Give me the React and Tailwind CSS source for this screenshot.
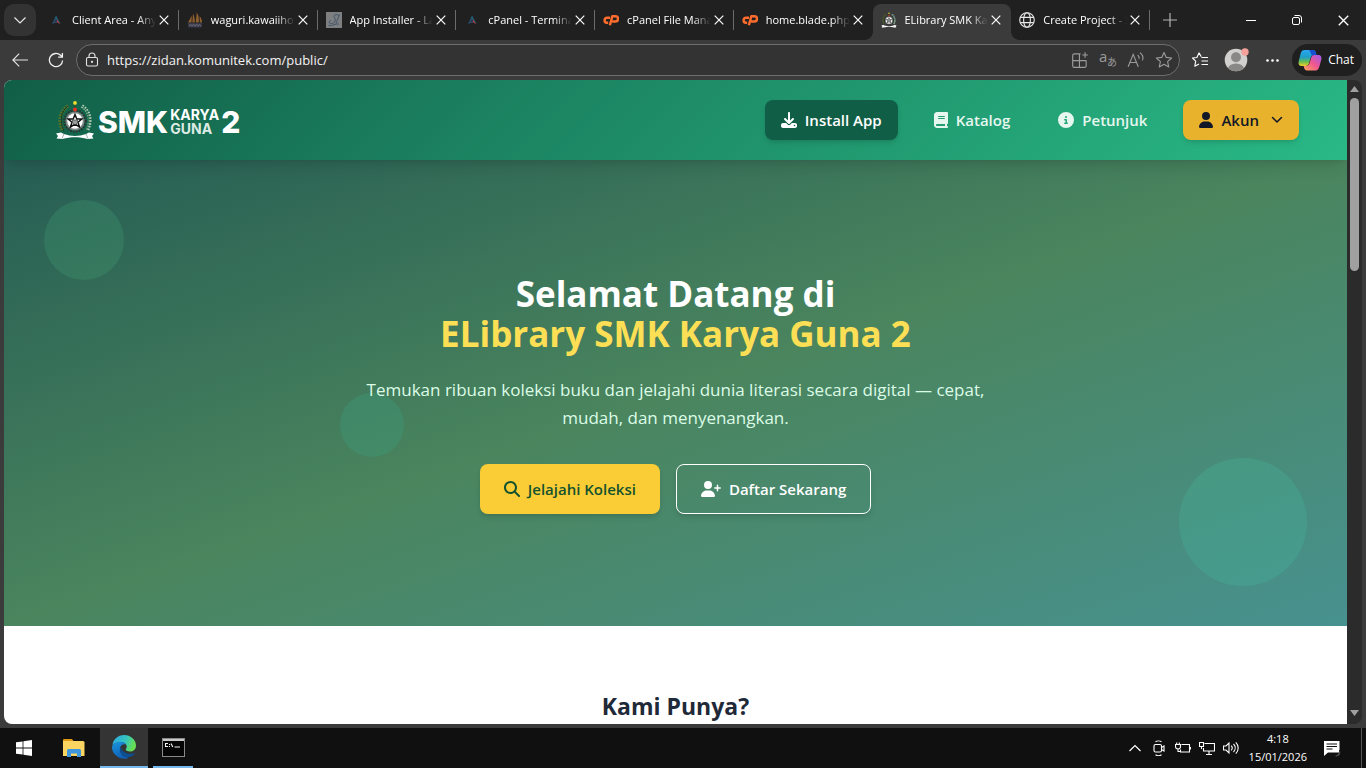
import React from "react";

function CloseIcon({ className }) {
  return (
    <svg viewBox="0 0 10 10" className={className} fill="none" stroke="currentColor" strokeWidth="1.2">
      <path d="M.7.7l8.6 8.6M9.3.7L.7 9.3" />
    </svg>
  );
}

function TriangleMark() {
  return (
    <svg viewBox="0 0 16 16" className="size-4">
      <path d="M8 3.5L4 12l2-.7L9 6z" fill="#274f6e" />
      <path d="M8 3.5l4.6 8.5-2.4-1.2L7.4 6z" fill="#245f76" />
      <path d="M8.6 7.6l3.6 4.2-3-1.4z" fill="#c23a3a" />
      <path d="M5 11.6l3.4-2.4 1 1.4-3 .4z" fill="#38558e" />
    </svg>
  );
}

function ShipMark() {
  return (
    <svg viewBox="0 0 16 16" className="size-4">
      <path d="M4.800 3.500L4.500 10.500H1zM6 1.500c1.500 3 2 6 1.800 9H5.300zM9.800.5c2 3 2.400 6.500 2 10H8.700zM12.600 4c1.600 2 2.400 4 2.400 6.500h-2.200z" fill="#8f5f2e" />
      <path d="M.5 11h15l-1.200 4.500H1.700z" fill="#34364a" />
      <path d="M2 14.500l1.500-2.500L5 14.500 6.500 12 8 14.500 9.500 12l1.500 2.500 1.500-2.500 1.500 2.500" stroke="#6a6672" fill="none" />
    </svg>
  );
}

function InstallerMark() {
  return (
    <svg viewBox="0 0 16 16" className="size-4">
      <rect width="16" height="16" fill="#7d7f80" />
      <path d="M13 3.500c-3-2-6-.5-4.500 2S9.500 11 5.500 11.500c-3 .3-3-2.500-.5-3M13.500 2.500L10 11.500M2.500 13.500c4 .5 6.500-2 10.500-1.500" fill="none" stroke="#3a5068" strokeWidth=".9" />
    </svg>
  );
}

function CpMark() {
  return (
    <svg viewBox="0 0 17 16" className="size-4" fill="none" stroke="#ff6c2c" strokeWidth="2.600" strokeLinejoin="round">
      <path d="M7.500 5.600H4.600a2.700 2.700 0 0 0-.4 5.400h1.300" />
      <path d="M7.300 13.600L9.900 4h3.300a2.600 2.600 0 0 1 0 5.600H9.700" />
    </svg>
  );
}

function Emblem({ className }) {
  return (
    <svg viewBox="0 0 38 40" className={className}>
      <path d="M12 6C4 11 2 21 7 31" fill="none" stroke="#5f7424" strokeWidth="3.600" strokeDasharray="1.600 1.200" />
      <path d="M12 6C5 11 3 21 8 31" fill="none" stroke="#1d3a20" strokeWidth="1" />
      <path d="M26 6c8 5 10 15 5 25" fill="none" stroke="#b3cbbb" strokeWidth="3.600" strokeDasharray="1.600 1.200" />
      <path d="M26 6c7 5 9 15 4 25" fill="none" stroke="#2d7a4c" strokeWidth="1" />
      <circle cx="19" cy="21" r="10.500" fill="none" stroke="#2b3231" strokeWidth="2.500" strokeDasharray="1.600 1.200" />
      <circle cx="19" cy="21" r="9.600" fill="#7c8582" />
      <circle cx="19" cy="21" r="7.800" fill="#fff" />
      <path d="M19 14.500l1.800 4.500h5L22 22.200l1.500 4.800-4.500-2.800-4.500 2.800 1.500-4.800L12.200 19h5z" fill="none" stroke="#111" strokeWidth="1.500" />
      <path d="M16.500 20h5v2.500L19 25l-2.500-2.500z" fill="#9a9fa0" stroke="#333" strokeWidth=".6" />
      <circle cx="19" cy="3" r="1.900" fill="#e9df2c" />
      <path d="M18.500 4.800h1V8h-1z" fill="#39421f" />
      <circle cx="19" cy="9.500" r="1.900" fill="#e4322b" />
      <path d="M0 33.500l5-1 3 1.500c7 2.500 15 2.500 22 0l3-1.500 5 1-2 2.500 1.500 2.500-6 .5c-8-2.500-17-2.500-25 0l-6-.5L2 36z" fill="#fff" />
      <path d="M8 34l-2 4.500M30 34l2 4.500" stroke="#8a9a96" strokeWidth=".8" />
    </svg>
  );
}

function GlobeMark() {
  return (
    <svg viewBox="0 0 16 16" className="size-4" fill="none" stroke="#e8e8e8" strokeWidth="1.100">
      <circle cx="8" cy="8" r="7.300" />
      <ellipse cx="8" cy="8" rx="3.400" ry="7.300" />
      <path d="M1.300 5.400h13.400M1.300 10.600h13.400" />
    </svg>
  );
}

const tabs = [
  { title: "Client Area - Anymhost", icon: <TriangleMark /> },
  { title: "waguri.kawaiihost.net", icon: <ShipMark /> },
  { title: "App Installer - Laravel", icon: <InstallerMark /> },
  { title: "cPanel - Terminal", icon: <TriangleMark /> },
  { title: "cPanel File Manager", icon: <CpMark /> },
  { title: "home.blade.php - Editor", icon: <CpMark />, last: true },
  { title: "ELibrary SMK Karya Guna 2", icon: <Emblem className="size-4" />, active: true },
  { title: "Create Project - Stitch", icon: <GlobeMark /> },
];

function Tab({ tab }) {
  const tone = tab.active
    ? "relative rounded-t-lg bg-[#3b3b3b]"
    : tab.last
      ? ""
      : "relative after:absolute after:right-0 after:top-1.5 after:h-5 after:w-px after:bg-[#6b6b6b]";
  return (
    <div className={"mt-1 flex h-9 min-w-0 flex-1 items-center pb-1 pl-2 pr-[7px] " + tone}>
      {tab.active && (
        <>
          <span className="absolute -left-2 bottom-0 size-2 bg-[radial-gradient(circle_at_0_0,transparent_7.5px,#3b3b3b_8px)]" />
          <span className="absolute -right-2 bottom-0 size-2 bg-[radial-gradient(circle_at_100%_0,transparent_7.5px,#3b3b3b_8px)]" />
        </>
      )}
      <button className="flex min-w-0 flex-1 items-center gap-2">
        <span className="flex-none">{tab.icon}</span>
        <span className="min-w-0 flex-1 overflow-hidden whitespace-nowrap text-left text-[11px] leading-4 text-white [mask-image:linear-gradient(to_right,black_78%,transparent_100%)]">
          {tab.title}
        </span>
      </button>
      <button aria-label="Close tab" className="grid size-4 flex-none place-items-center text-white">
        <CloseIcon className="size-[10px]" />
      </button>
    </div>
  );
}

function TabStrip() {
  return (
    <div className="flex h-10 flex-none bg-[#202020]">
      <button aria-label="Tab actions" className="m-1 grid size-8 flex-none place-items-center rounded-[10px] bg-[#333333]">
        <svg viewBox="0 0 12 7" className="w-3" fill="none" stroke="#e6e6e6" strokeWidth="1.200">
          <path d="M.5.5L6 6 11.500.5" />
        </svg>
      </button>
      <div className="flex min-w-0 max-w-[1110px] flex-1">
        {tabs.map((t) => (
          <Tab key={t.title} tab={t} />
        ))}
      </div>
      <button aria-label="New tab" className="grid w-10 flex-none place-items-center">
        <svg viewBox="0 0 14 14" className="size-[14px]" stroke="#b4b4b4" strokeWidth="1.200">
          <path d="M7 0v14M0 7h14" />
        </svg>
      </button>
      <div className="ml-auto flex flex-none text-white">
        <button aria-label="Minimize" className="grid w-[46px] place-items-center">
          <span className="h-px w-[10px] bg-white" />
        </button>
        <button aria-label="Restore" className="grid w-[46px] place-items-center">
          <svg viewBox="0 0 10 10" className="size-[10px]" fill="none" stroke="currentColor">
            <rect x=".5" y="2.500" width="7" height="7" rx="1.500" />
            <path d="M2.500.5H7A2.500 2.500 0 0 1 9.500 3v4.500" />
          </svg>
        </button>
        <button aria-label="Close" className="grid w-[46px] place-items-center">
          <CloseIcon className="size-[11px]" />
        </button>
      </div>
    </div>
  );
}

const starPath = "M8 1.300l2 4.400 4.800.5-3.600 3.200 1 4.800L8 11.800l-4.200 2.400 1-4.800L1.200 6.200 6 5.700z";

function CopilotMark() {
  return (
    <svg viewBox="0 0 24 22" className="w-6">
      <defs>
        <linearGradient id="cpA" x1="0" y1="0" x2="0" y2="1">
          <stop offset="0" stopColor="#2aa7f0" />
          <stop offset=".45" stopColor="#1f9ec8" />
          <stop offset=".75" stopColor="#6cc04a" />
          <stop offset="1" stopColor="#f4cf2d" />
        </linearGradient>
        <linearGradient id="cpB" x1="1" y1="0" x2="0" y2="1">
          <stop offset="0" stopColor="#9a5cf0" />
          <stop offset=".5" stopColor="#f0568f" />
          <stop offset="1" stopColor="#ffa45c" />
        </linearGradient>
      </defs>
      <path d="M6.500 1H15c1.700 0 2.300 1 2.800 2.500L18.500 6H16c-2 0-2.800 1-3.400 3l-1.500 5c-.6 2-1.500 3-3.600 3H4c-3 0-4-2-3.200-5L2.500 5c.7-2.500 1.700-4 4-4z" fill="url(#cpA)" />
      <path d="M11 1h4c1.700 0 2.300 1 2.800 2.500L18.500 6H16c-1 0-1.700.2-2.200.7C13 4.500 12.300 2 11 1z" fill="#1650d0" />
      <path d="M17.500 21.500H9c-1.700 0-2.300-1-2.800-2.500L5.600 17H8c2 0 3-1 3.600-3l1.500-5c.6-2 1.300-3 3.400-3H20c3 0 4 2 3.200 5l-1.700 6c-.7 2.500-1.700 4.500-4 4.500z" fill="url(#cpB)" />
    </svg>
  );
}

function Toolbar() {
  return (
    <div className="flex h-10 flex-none items-center">
      <button aria-label="Back" className="grid w-10 place-items-center">
        <svg viewBox="0 0 16 14" className="w-4" fill="none" stroke="#e2e2e2" strokeWidth="1.200">
          <path d="M16 7H1M7.200.7L.9 7l6.300 6.300" />
        </svg>
      </button>
      <button aria-label="Refresh" className="grid w-8 place-items-center">
        <svg viewBox="0 0 16 16" className="size-4" fill="none" stroke="#f0f0f0" strokeWidth="1.300">
          <path d="M14.600 8.500A6.600 6.600 0 1 1 12.600 3.300L14.300 5M14.400 1v4.200h-4.200" />
        </svg>
      </button>
      <div className="ml-1 flex h-8 min-w-0 flex-1 items-center rounded-full border border-[#6d6d6d] bg-[#333333] pl-2 pr-1.5">
        <svg viewBox="0 0 14 16" className="h-4 w-[14px] flex-none" fill="none" stroke="#e2e2e2" strokeWidth="1.100">
          <rect x="1.500" y="5.500" width="11" height="8.500" rx="1.500" />
          <path d="M4 5.500V4a3 3 0 0 1 6 0v1.500" />
          <circle cx="7" cy="9.800" r=".6" fill="#e2e2e2" />
        </svg>
        <input
          aria-label="Address"
          readOnly
          value="https://zidan.komunitek.com/public/"
          className="ml-2 min-w-0 flex-1 bg-transparent text-[13px] leading-5 text-[#f4f4f4] outline-none"
        />
        <div className="flex flex-none items-center gap-[10px] text-[#9b9b9b]">
          <svg viewBox="0 0 16 16" className="size-[18px]" fill="none" stroke="currentColor" strokeWidth="1">
            <path d="M8.500 2.500H3A1.500 1.500 0 0 0 1.500 4v9A1.500 1.500 0 0 0 3 14.500h9a1.500 1.500 0 0 0 1.500-1.500V8.500M1.500 8.500h12M7.500 2.500v12M12.500 1v5M10 3.500h5" />
          </svg>
          <svg viewBox="0 0 18 18" className="size-[18px]" fill="currentColor">
            <text x="0" y="11" fontSize="15" fontFamily="Open Sans, sans-serif">a</text>
            <text x="8" y="15" fontSize="10" fontFamily="Noto Sans CJK JP, sans-serif">あ</text>
          </svg>
          <svg viewBox="0 0 16 16" className="size-[18px]" fill="none" stroke="currentColor" strokeWidth="1">
            <path d="M1 14L5.500 3 10 14M2.700 10.200h5.600M9.500 3.500c1.200.9 1.500 2.200 1.200 3.500M11.500 1.500c2.300 1.500 3.200 4 2.300 6.800" />
          </svg>
          <svg viewBox="0 0 16 16" className="size-[18px]" fill="none" stroke="currentColor" strokeLinejoin="round">
            <path d={starPath} />
          </svg>
        </div>
      </div>
      <button aria-label="Favorites" className="ml-3 grid w-4 place-items-center">
        <svg viewBox="0 0 16 16" className="size-4" fill="none" stroke="#fff" strokeWidth="1.100" strokeLinejoin="round">
          <path d="M9.300 4.800L7 .9 4.900 5.500.5 6l3.200 3.200-.9 5L7 12M9.500 5.500H16M9.500 9H16M9.500 12.500H16" />
        </svg>
      </button>
      <button aria-label="Profile" className="ml-4 grid w-6 place-items-center">
        <svg viewBox="0 0 24 24" className="size-6 overflow-visible">
          <defs>
            <clipPath id="av"><circle cx="12" cy="12" r="11.300" /></clipPath>
          </defs>
          <circle cx="12" cy="12" r="11.300" fill="#d2d0ce" />
          <circle cx="12" cy="9.300" r="5" fill="#8a8886" />
          <ellipse cx="12" cy="21" rx="8" ry="5.500" fill="#8a8886" clipPath="url(#av)" />
          <circle cx="21" cy="4" r="3.700" fill="#f5a19b" />
        </svg>
      </button>
      <button aria-label="Settings and more" className="ml-2 grid w-8 place-items-center">
        <svg viewBox="0 0 13 3" className="w-[13px]" fill="#fff">
          <circle cx="1.500" cy="1.500" r="1.300" /><circle cx="6.500" cy="1.500" r="1.300" /><circle cx="11.500" cy="1.500" r="1.300" />
        </svg>
      </button>
      <button className="ml-1 mr-1 flex h-8 items-center gap-1.5 rounded-full bg-[#1f1f1f] pl-1.5 pr-2 text-[12px] text-white">
        <CopilotMark />
        Chat
      </button>
    </div>
  );
}

function DownloadIcon() {
  return (
    <svg viewBox="0 0 512 512" className="size-4 flex-none" fill="currentColor">
      <path d="M288 32c0-17.700-14.300-32-32-32s-32 14.300-32 32v242.700l-73.400-73.400c-12.500-12.500-32.800-12.500-45.300 0s-12.500 32.800 0 45.300l128 128c12.500 12.500 32.800 12.500 45.300 0l128-128c12.500-12.500 12.500-32.800 0-45.300s-32.800-12.500-45.300 0L288 274.700V32z" />
      <path fillRule="evenodd" d="M64 352c-35.300 0-64 28.700-64 64v32c0 35.300 28.700 64 64 64h384c35.300 0 64-28.700 64-64v-32c0-35.300-28.700-64-64-64H346.500l-45.300 45.300c-25 25-65.500 25-90.500 0L165.500 352H64zm368 56a24 24 0 1 1 0 48 24 24 0 1 1 0-48z" />
    </svg>
  );
}

function BookIcon() {
  return (
    <svg viewBox="0 0 448 512" className="h-4 w-[14px] flex-none" fill="currentColor">
      <path fillRule="evenodd" d="M96 0C43 0 0 43 0 96v320c0 53 43 96 96 96h320c17.700 0 32-14.300 32-32s-14.300-32-32-32v-64c17.700 0 32-14.300 32-32V32c0-17.700-14.300-32-32-32H96zm0 384h256v64H96c-17.700 0-32-14.300-32-32s14.300-32 32-32zm32-240c0-8.800 7.200-16 16-16h192c8.800 0 16 7.200 16 16s-7.200 16-16 16H144c-8.800 0-16-7.200-16-16zm16 48h192c8.800 0 16 7.200 16 16s-7.200 16-16 16H144c-8.800 0-16-7.200-16-16s7.200-16 16-16z" />
    </svg>
  );
}

function InfoIcon() {
  return (
    <svg viewBox="0 0 512 512" className="size-4 flex-none" fill="currentColor">
      <path fillRule="evenodd" d="M256 512a256 256 0 1 0 0-512 256 256 0 1 0 0 512zM224 160a32 32 0 1 1 64 0 32 32 0 1 1-64 0zm-8 64h48c13 0 24 11 24 24v88h8c13 0 24 11 24 24s-11 24-24 24h-80c-13 0-24-11-24-24s11-24 24-24h24v-64h-24c-13 0-24-11-24-24s11-24 24-24z" />
    </svg>
  );
}

function UserIcon() {
  return (
    <svg viewBox="0 0 448 512" className="h-4 w-[14px] flex-none" fill="currentColor">
      <path d="M224 256a128 128 0 1 0 0-256 128 128 0 1 0 0 256zm-45.700 48C79.800 304 0 383.800 0 482.300 0 498.700 13.300 512 29.700 512h388.600c16.400 0 29.700-13.300 29.700-29.700 0-98.500-79.800-178.300-178.300-178.300h-91.400z" />
    </svg>
  );
}

function SearchIcon() {
  return (
    <svg viewBox="0 0 512 512" className="size-4 flex-none" fill="currentColor">
      <path d="M416 208c0 46-15 88-40 123l127 126c12 13 12 33 0 46s-33 12-46 0L331 376c-35 25-77 40-123 40C93 416 0 323 0 208S93 0 208 0s208 93 208 208zM208 352a144 144 0 1 0 0-288 144 144 0 1 0 0 288z" />
    </svg>
  );
}

function UserPlusIcon() {
  return (
    <svg viewBox="0 0 640 512" className="h-4 w-5 flex-none" fill="currentColor">
      <path d="M224 256a128 128 0 1 0 0-256 128 128 0 1 0 0 256zm-45.700 48C79.800 304 0 383.800 0 482.300 0 498.700 13.300 512 29.700 512h388.600c16.400 0 29.700-13.300 29.700-29.700 0-98.500-79.800-178.300-178.300-178.300h-91.400zM504 312v-64h-64c-13.300 0-24-10.700-24-24s10.700-24 24-24h64v-64c0-13.300 10.700-24 24-24s24 10.700 24 24v64h64c13.300 0 24 10.700 24 24s-10.700 24-24 24h-64v64c0 13.300-10.700 24-24 24s-24-10.700-24-24z" />
    </svg>
  );
}

function SiteHeader() {
  return (
    <header className="relative z-10 flex h-20 flex-none items-center justify-between bg-[linear-gradient(135deg,#115e46_0%,#1b805f_35%,#29b986_100%)] px-12 shadow-lg">
      <a href="#beranda" className="ml-1 flex items-end font-['Inter',sans-serif] font-extrabold text-white">
        <Emblem className="mr-1 h-10 w-[38px]" />
        <span className="text-[30px] leading-9">SMK</span>
        <span className="ml-0.5 mr-0.5 grid pb-1 text-[14px] font-bold leading-[14px]">
          <span>KARYA</span>
          <span className="text-[#dcebe4]">GUNA</span>
        </span>
        <span className="text-[30px] leading-9">2</span>
      </a>
      <nav className="flex items-center gap-6 text-[15px] font-semibold leading-6">
        <button className="flex h-10 items-center gap-2 rounded-lg bg-[#115e46] px-4 text-white shadow-md">
          <DownloadIcon />
          Install App
        </button>
        <a href="#katalog" className="flex items-center gap-2 px-3 text-[#e6f7ef]">
          <BookIcon />
          Katalog
        </a>
        <a href="#petunjuk" className="flex items-center gap-2 px-3 text-[#e6f7ef]">
          <InfoIcon />
          Petunjuk
        </a>
        <button className="flex h-10 items-center gap-2 rounded-lg bg-[#e8b22c] px-4 text-[#111827] shadow-md">
          <UserIcon />
          Akun
          <svg viewBox="0 0 12 8" className="ml-1 w-3" fill="none" stroke="currentColor" strokeWidth="1.500" strokeLinecap="round" strokeLinejoin="round">
            <path d="M1.500 1.500L6 6l4.500-4.500" />
          </svg>
        </button>
      </nav>
    </header>
  );
}

function Hero() {
  return (
    <section className="relative flex-none bg-[linear-gradient(to_bottom_right,#265d54_0%,#4a855e_50%,#47918f_100%)] py-28 text-center">
      <span className="absolute left-10 top-10 size-20 rounded-full bg-[#4bb880]/20" />
      <span className="absolute left-1/4 top-1/2 size-16 rounded-full bg-[#36b494]/20" />
      <span className="absolute bottom-10 right-10 size-32 rounded-full bg-[#48cdaa]/20" />
      <div className="relative mx-auto max-w-2xl">
        <h1 className="pt-0.5 text-[35px] font-bold leading-10 text-white">
          <span className="block">Selamat Datang di</span>
          <span className="block text-[#fddf55]">ELibrary SMK Karya Guna 2</span>
        </h1>
        <p className="mx-auto mt-[22px] text-[17px] leading-7 text-[#dcfce7]">
          Temukan ribuan koleksi buku dan jelajahi dunia literasi secara digital — cepat, mudah, dan menyenangkan.
        </p>
        <div className="mt-8 flex justify-center gap-4 text-[15px] font-semibold leading-6">
          <a href="#koleksi" className="flex h-[50px] items-center gap-2 rounded-lg bg-[#facc36] px-6 text-[#14532d] shadow-md">
            <SearchIcon />
            Jelajahi Koleksi
          </a>
          <a href="#daftar" className="flex h-[50px] items-center gap-2 rounded-lg border border-white px-6 text-white shadow-md">
            <UserPlusIcon />
            Daftar Sekarang
          </a>
        </div>
      </div>
    </section>
  );
}

function Scrollbar() {
  return (
    <div className="flex w-[15px] flex-none flex-col items-center bg-[#2b2b2b] pb-2 pt-1.5 text-[#a0a0a0]">
      <svg viewBox="0 0 9 6" className="w-[9px]" fill="currentColor"><path d="M4.500 0L9 6H0z" /></svg>
      <span className="mt-1.5 h-[173px] w-[9px] rounded-full bg-[#a0a0a0]" />
      <svg viewBox="0 0 9 6" className="mt-auto w-[9px]" fill="currentColor"><path d="M4.500 6L9 0H0z" /></svg>
    </div>
  );
}

function EdgeMark() {
  return (
    <svg viewBox="0 0 24 24" className="size-6">
      <defs>
        <linearGradient id="eg1" x1="0" y1="0" x2="1" y2=".3">
          <stop offset="0" stopColor="#2aa5e0" />
          <stop offset=".6" stopColor="#35c6c0" />
          <stop offset="1" stopColor="#66dd55" />
        </linearGradient>
        <linearGradient id="eg2" x1="0" y1="0" x2=".4" y2="1">
          <stop offset="0" stopColor="#1b96e0" />
          <stop offset="1" stopColor="#0f5fb5" />
        </linearGradient>
      </defs>
      <path d="M.3 10.600C1 4.500 6 0 12 0c7 0 12 5 12 10.600 0 4-3 6-6 6-2.800 0-4.300-1.200-4.300-2 0-.7 1-1.200 1-3 0-2.500-2.600-4.500-5.900-4.500C4.500 7.100.8 9 .3 10.600z" fill="url(#eg1)" />
      <path d="M.2 11.500C.8 8.800 4 6.700 8 6.700c3 0 5.300 1 6.300 2.800-4-1.300-6.800 1.500-6.300 5.500.5 4.500 4 7.500 8.300 7.500l-1 1C8 25 .2 20 0 12.500z" fill="url(#eg2)" />
      <path d="M8 13.500c-.3 5 3.500 8.700 7.500 8.700 3 0 5.500-1.200 7.200-3.700.3-.5-.1-.8-.6-.6-6 2.600-12-1-12.600-4.400-.2-1-1.200-1.200-1.500 0z" fill="#0c4f93" />
    </svg>
  );
}

function Taskbar() {
  return (
    <footer className="flex h-10 flex-none items-stretch bg-[#101010] text-white">
      <button aria-label="Start" className="grid w-12 place-items-center">
        <svg viewBox="0 0 16 16" className="size-4" fill="#fff">
          <path d="M0 2.300l6.600-.9v6.200H0zM7.400 1.300L16 0v7.600H7.400zM0 8.400h6.600v6.200L0 13.700zM7.400 8.400H16V16l-8.600-1.200z" />
        </svg>
      </button>
      <button aria-label="File Explorer" className="mx-0.5 grid w-12 place-items-center">
        <svg viewBox="0 0 22 18" className="w-[22px]">
          <path d="M0 1a1 1 0 0 1 1-1h8l1.500 2H0z" fill="#e09a14" />
          <path d="M0 2h20a1.500 1.500 0 0 1 1.500 1.500V17H0z" fill="#fcd462" />
          <path d="M4 18v-6.500A1.500 1.500 0 0 1 5.500 10h11a1.500 1.500 0 0 1 1.500 1.500V18h-4v-3.500H8V18z" fill="#3e96dc" />
        </svg>
      </button>
      <button aria-label="Microsoft Edge" className="grid w-12 place-items-center border-b-2 border-[#76b9ed] bg-[#343434]">
        <EdgeMark />
      </button>
      <button aria-label="Command Prompt" className="mx-[5px] grid w-10 place-items-center border-b-2 border-[#76b9ed]">
        <svg viewBox="0 0 23 19" className="w-[23px]">
          <rect x=".5" y=".5" width="22" height="18" fill="#050505" stroke="#8a8a8a" />
          <rect x="1" y="1" width="21" height="2" fill="#c9c9c9" />
          <path d="M6 5.500H3.500v3H6M7.500 6v1M7.500 8v1M9 5.500l1.800 3.500M12.500 9H18" stroke="#f4f4f4" fill="none" strokeWidth="1.100" />
        </svg>
      </button>
      <div className="ml-auto flex items-center">
        <div className="flex items-center gap-2">
          <svg viewBox="0 0 16 16" className="size-4" fill="none" stroke="#fff" strokeWidth="1.200"><path d="M2.500 11L8 5.500l5.500 5.500" /></svg>
          <svg viewBox="0 0 16 16" className="size-4" fill="none" stroke="#fff" strokeWidth="1.100">
            <rect x="3" y="4.500" width="7.500" height="7.500" rx="1.500" />
            <path d="M10.500 7.500L13 6v5l-2.500-1.500M4.500 1.800c1.500-1 4.500-1 6 0M4.500 14.700c1.500 1 4.500 1 6 0" />
          </svg>
          <svg viewBox="0 0 16 16" className="size-4" fill="none" stroke="#fff" strokeWidth="1.100">
            <path d="M6.500 4.500h8v7.500H5.500V9.500M15.500 7v2.500M.5 4.500h5v2a2.500 2.500 0 0 1-5 0zM1.700 4.500v-2M4.300 4.500v-2M3 9v2.500h2.500" />
          </svg>
          <svg viewBox="0 0 16 16" className="size-4" fill="none" stroke="#fff" strokeWidth="1.100">
            <path d="M5.500 3.500h10v7.500h-11V8M10 11v3M7 14.500h6M.5 2.500h4v4h-4zM2.500 6.500V9" />
          </svg>
          <svg viewBox="0 0 16 16" className="size-4" fill="none" stroke="#fff" strokeWidth="1.100">
            <path d="M.5 6H3l3-3v10l-3-3H.5zM8.200 5.700c1.200 1.300 1.200 3.300 0 4.600M10.500 4c2.200 2.300 2.200 5.700 0 8M12.800 2.300c3.200 3.300 3.200 8.100 0 11.400" />
          </svg>
        </div>
        <div className="ml-[10px] text-center text-[11px] leading-[18px]">
          <div>4:18</div>
          <div>15/01/2026</div>
        </div>
        <button aria-label="Notifications" className="ml-4 mr-5 grid place-items-center">
          <svg viewBox="0 0 18 17" className="w-[18px]">
            <path d="M1 1h15.500v11.500H5L1 16z" fill="#fff" />
            <path d="M3.500 4h10.500M3.500 6.500h10.500M3.500 9h6" stroke="#101010" strokeWidth="1" />
            <path d="M11 15.500a4 4 0 0 0 5.500-5.500 4.500 4.500 0 0 1-5.500 5.500z" fill="#fff" stroke="#101010" strokeWidth=".7" />
          </svg>
        </button>
        <span className="mr-1 h-10 w-px bg-[#555]" />
      </div>
    </footer>
  );
}

export default function App() {
  return (
    <div className="flex h-screen flex-col overflow-hidden bg-[#3b3b3b] font-['Open_Sans','Noto_Sans',sans-serif]">
      <TabStrip />
      <Toolbar />
      <div className="mx-1 mb-1 flex min-h-0 flex-1 overflow-hidden rounded-lg">
        <main className="flex min-w-0 flex-1 flex-col overflow-hidden bg-white">
          <SiteHeader />
          <Hero />
          <section className="flex-none py-16 text-center">
            <h2 className="text-[23px] font-bold leading-8 text-[#1f2937]">Kami Punya?</h2>
          </section>
        </main>
        <Scrollbar />
      </div>
      <Taskbar />
    </div>
  );
}
